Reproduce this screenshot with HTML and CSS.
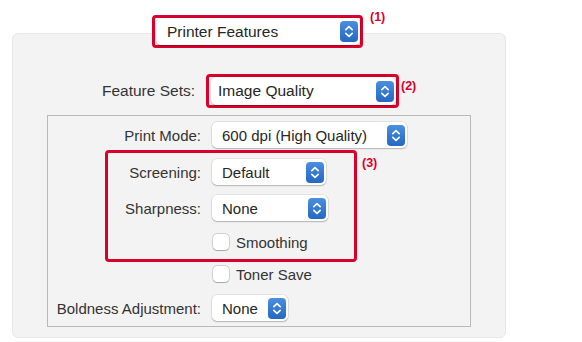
FILE: index.html
```html
<!DOCTYPE html>
<html>
<head>
<meta charset="utf-8">
<link rel="stylesheet" href="styles.css">
</head>
<body>
<div class="page">
  <div class="title-row">
    <div class="mark mark-title">
      <div class="popup popup-title"><span class="value">Printer Features</span><span class="stepper"><svg width="18" height="21" viewBox="0 0 18 21"><path d="M5.8 8.6 L9 5.6 L12.2 8.6 M5.8 12.4 L9 15.4 L12.2 12.4" fill="none" stroke="#fff" stroke-width="1.6" stroke-linecap="round" stroke-linejoin="round"/></svg></span></div>
      <span class="tag tag-1">(1)</span>
    </div>
  </div>
  <div class="panel">
    <div class="feature-row">
      <span class="label feature-label">Feature Sets:</span>
      <div class="mark mark-feature">
        <div class="popup popup-feature"><span class="value">Image Quality</span><span class="stepper"><svg width="18" height="21" viewBox="0 0 18 21"><path d="M5.8 8.6 L9 5.6 L12.2 8.6 M5.8 12.4 L9 15.4 L12.2 12.4" fill="none" stroke="#fff" stroke-width="1.6" stroke-linecap="round" stroke-linejoin="round"/></svg></span></div>
        <span class="tag tag-2">(2)</span>
      </div>
    </div>
    <div class="box">
      <div class="row row-first">
        <span class="label lab-wide">Print Mode:</span>
        <div class="popup w-mode"><span class="value">600 dpi (High Quality)</span><span class="stepper"><svg width="18" height="21" viewBox="0 0 18 21"><path d="M5.8 8.6 L9 5.6 L12.2 8.6 M5.8 12.4 L9 15.4 L12.2 12.4" fill="none" stroke="#fff" stroke-width="1.6" stroke-linecap="round" stroke-linejoin="round"/></svg></span></div>
      </div>
      <div class="group">
        <span class="tag tag-3">(3)</span>
        <div class="row row-g1">
          <span class="label lab-narrow">Screening:</span>
          <div class="popup w-screen"><span class="value">Default</span><span class="stepper"><svg width="18" height="21" viewBox="0 0 18 21"><path d="M5.8 8.6 L9 5.6 L12.2 8.6 M5.8 12.4 L9 15.4 L12.2 12.4" fill="none" stroke="#fff" stroke-width="1.6" stroke-linecap="round" stroke-linejoin="round"/></svg></span></div>
        </div>
        <div class="row row-g2">
          <span class="label lab-narrow">Sharpness:</span>
          <div class="popup w-sharp"><span class="value">None</span><span class="stepper"><svg width="18" height="21" viewBox="0 0 18 21"><path d="M5.8 8.6 L9 5.6 L12.2 8.6 M5.8 12.4 L9 15.4 L12.2 12.4" fill="none" stroke="#fff" stroke-width="1.6" stroke-linecap="round" stroke-linejoin="round"/></svg></span></div>
        </div>
        <div class="row check-row row-g3">
          <span class="label lab-narrow"></span>
          <span class="check"></span><span class="check-text">Smoothing</span>
        </div>
      </div>
      <div class="row check-row row-toner">
        <span class="label lab-wide"></span>
        <span class="check"></span><span class="check-text">Toner Save</span>
      </div>
      <div class="row row-bold">
        <span class="label lab-wide">Boldness Adjustment:</span>
        <div class="popup w-bold"><span class="value">None</span><span class="stepper"><svg width="18" height="21" viewBox="0 0 18 21"><path d="M5.8 8.6 L9 5.6 L12.2 8.6 M5.8 12.4 L9 15.4 L12.2 12.4" fill="none" stroke="#fff" stroke-width="1.6" stroke-linecap="round" stroke-linejoin="round"/></svg></span></div>
      </div>
    </div>
  </div>
</div>
</body>
</html>
```
FILE: styles.css
```css
* { box-sizing: border-box; }
html, body { margin: 0; background: #ffffff; }
body {
  font-family: "Liberation Sans", Arial, sans-serif;
  font-size: 15px;
  color: #2f2f2f;
}
.page {
  width: 494px;
  margin-left: 12px;
  padding-top: 15px;
}
.title-row {
  position: relative;
  z-index: 2;
  display: flex;
  padding-left: 140px;
}
.mark {
  position: relative;
  border: 3px solid #d9002b;
  border-radius: 4px;
}
.mark-title { width: 211px; height: 33px; padding: 0 0 0 1px; }
.mark-feature { width: 193px; height: 34px; padding: 0 0 0 2px; }
.tag {
  position: absolute;
  font-weight: bold;
  font-size: 12.5px;
  color: #d9002b;
  line-height: 14px;
}
.tag-1 { left: calc(100% + 10px); top: -8px; }
.tag-2 { left: calc(100% + 5px); top: 2px; }
.tag-3 { left: calc(100% + 8px); top: 3px; }

.popup {
  display: flex;
  align-items: center;
  height: 26px;
  background: #ffffff;
  border-radius: 5px;
  padding: 0 2px 0 10px;
  box-shadow: 0 0 0 0.5px rgba(0, 0, 0, 0.12), 0 1px 1.5px rgba(0, 0, 0, 0.22);
  color: #262626;
}
.popup .value { flex: 1; white-space: nowrap; }
.popup-title { height: 27px; font-size: 15.5px; padding-left: 11px; }
.popup-feature { height: 28px; font-size: 15.5px; padding-left: 7px; }
.stepper {
  display: flex;
  width: 18px;
  height: 21px;
  border-radius: 4px;
  background: linear-gradient(#4a8fe0, #2567c2);
}
.stepper svg { display: block; }

.panel {
  position: relative;
  z-index: 1;
  margin-top: -15px;
  background: #f3f3f3;
  border: 1px solid #e7e7e7;
  border-radius: 6px;
  padding: 40px 0 10px 34px;
}
.feature-row {
  display: flex;
  align-items: center;
  margin-left: -34px;
}
.feature-label {
  width: 182px;
  text-align: right;
  margin-right: 10px;
  font-size: 15.5px;
}
.box {
  margin-top: 7px;
  width: 424px;
  border: 1px solid #b9b9b9;
  padding-bottom: 5px;
}
.row {
  display: flex;
  align-items: center;
  height: 26px;
}
.label {
  text-align: right;
  white-space: nowrap;
  margin-right: 11px;
  color: #333333;
}
.lab-wide { width: 153px; }
.lab-narrow { width: 93px; }
.row-first { margin-top: 6px; }
.group {
  position: relative;
  margin: 2px 0 0 57px;
  width: 252px;
  border: 3px solid #d9002b;
  border-radius: 4px;
  padding: 6px 0 7px 0;
}
.row-g2 { margin-top: 10px; }
.check-row { height: 20px; }
.row-g3 { margin-top: 11px; }
.row-toner { margin-top: 2px; }
.row-bold { margin-top: 11px; }
.check {
  width: 16px;
  height: 16px;
  margin-left: 1px;
  margin-right: 7px;
  background: #ffffff;
  border-radius: 4px;
  box-shadow: 0 0 0 0.5px rgba(0, 0, 0, 0.25), 0 0.5px 1px rgba(0, 0, 0, 0.2);
}
.check-text { color: #333333; }
.w-mode { width: 195px; }
.w-screen { width: 114px; }
.w-sharp { width: 116px; }
.w-bold { width: 76px; }
```
